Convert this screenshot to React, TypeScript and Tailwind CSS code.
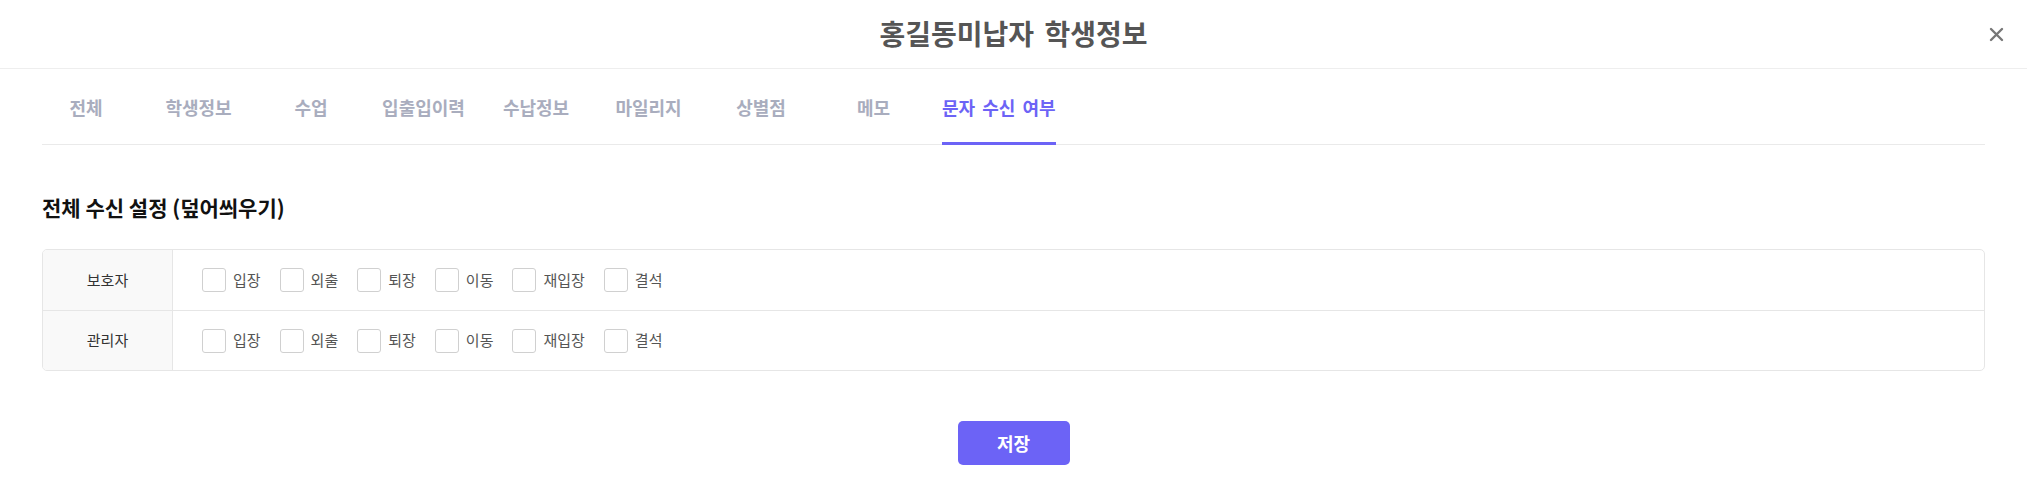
import React from 'react';

const tabs = ['전체', '학생정보', '수업', '입출입이력', '수납정보', '마일리지', '상별점', '메모', '문자 수신 여부'];
const options = ['입장', '외출', '퇴장', '이동', '재입장', '결석'];
const rows = ['보호자', '관리자'];

const font = { fontFamily: '"Noto Sans CJK KR", "Noto Sans", sans-serif' };

const App: React.FC = () => {
  return (
    <div className="w-[2027px] h-[484px] bg-white flex flex-col" style={font}>
      {/* Header */}
      <header className="h-[69px] shrink-0 grid grid-cols-[1fr_auto_1fr] items-center border-b border-[#eeeeee]">
        <div></div>
        <h1 className="text-[28px] font-bold text-[#555555] [word-spacing:4px] leading-none pb-[2px]">홍길동미납자 학생정보</h1>
        <div className="flex justify-end pr-[19px]">
          <button className="p-1 text-[#777777]" title="Close">
            <svg width="15" height="15" viewBox="0 0 15 15" fill="none" stroke="currentColor" strokeWidth="2.4" strokeLinecap="round">
              <path d="M2 2l11 11M13 2L2 13" />
            </svg>
          </button>
        </div>
      </header>

      {/* Tabs */}
      <nav className="mx-[42px] flex gap-[24.5px] border-b border-[#eaeaea] h-[76px]">
        {tabs.map((t, i) => {
          const active = i === tabs.length - 1;
          return (
            <div
              key={t}
              className={`min-w-[88px] flex items-center justify-center pt-[4px] -mb-px border-b-[3px] text-[18px] font-semibold whitespace-nowrap [word-spacing:3px] ${
                active ? 'border-[#6c63f6] text-[#6c63f6]' : 'border-transparent text-[#a9adbe]'
              }`}
            >
              {t}
            </div>
          );
        })}
      </nav>

      {/* Body */}
      <section className="px-[42px] pt-[46px]">
        <h2 className="text-[21px] font-bold text-[#111111] leading-[32px]">전체 수신 설정 (덮어씌우기)</h2>
        <div className="mt-[26px] border border-[#e6e6e6] rounded-[5px] overflow-hidden">
          {rows.map((r, ri) => (
            <div key={r} className={`flex h-[60px] ${ri > 0 ? 'border-t border-[#e6e6e6]' : ''}`}>
              <div className="w-[130px] shrink-0 bg-[#f9f9f9] border-r border-[#e6e6e6] flex items-center justify-center text-[15px] text-[#333333]">
                {r}
              </div>
              <div className="flex items-center pl-[29px] gap-[19px]">
                {options.map((o) => (
                  <label key={o} className="flex items-center gap-[7px] cursor-pointer">
                    <span className="w-6 h-6 border border-[#d0d0d0] rounded-[3px] bg-white"></span>
                    <span className="text-[15px] text-[#555555]">{o}</span>
                  </label>
                ))}
              </div>
            </div>
          ))}
        </div>
      </section>

      {/* Footer */}
      <div className="flex justify-center pt-[50px]">
        <button className="w-[112px] h-[44px] rounded-[5px] bg-[#6c63f6] text-white text-[18px] font-bold">저장</button>
      </div>
    </div>
  );
};

export default App;
